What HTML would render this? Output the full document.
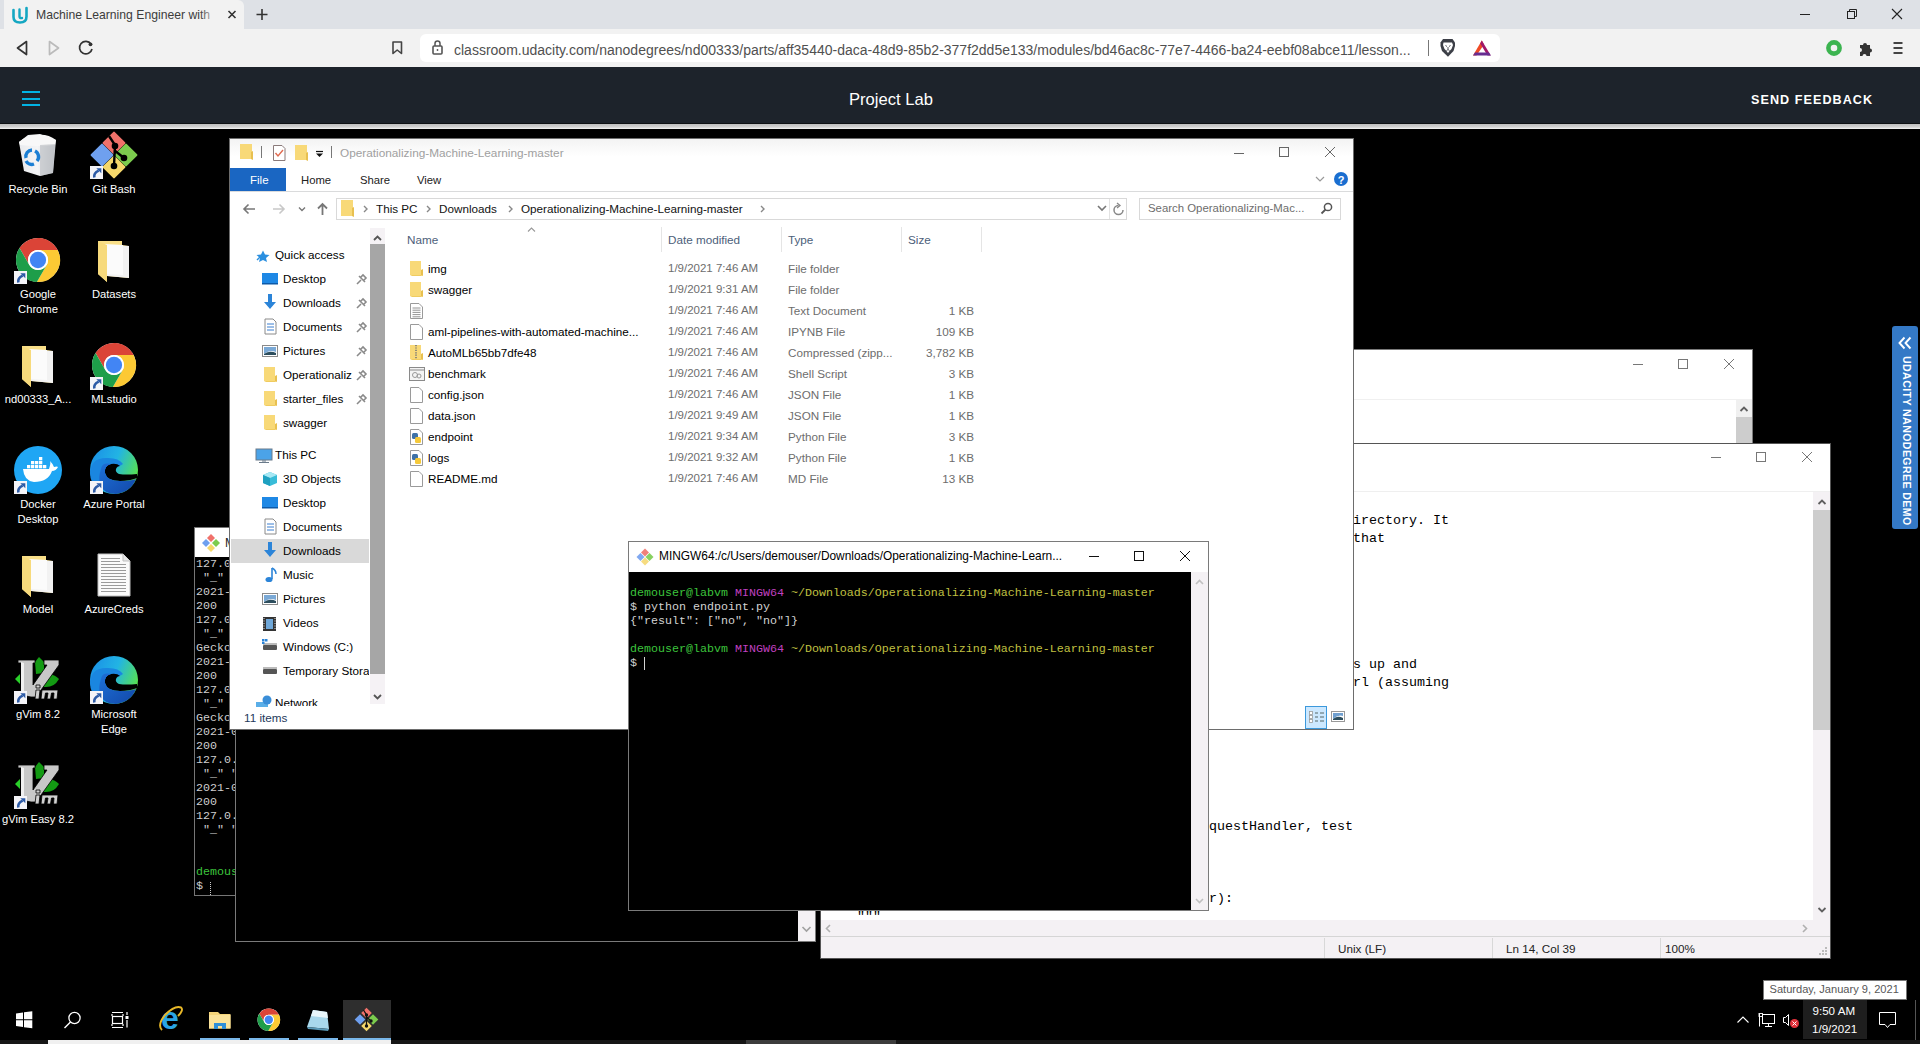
<!DOCTYPE html>
<html><head><meta charset="utf-8">
<style>
*{margin:0;padding:0;box-sizing:border-box}
html,body{width:1920px;height:1044px;overflow:hidden;background:#000;font-family:"Liberation Sans",sans-serif;position:relative}
.a{position:absolute}
.t{position:absolute;white-space:nowrap;line-height:1}
.mono{font-family:"Liberation Mono",monospace}
svg.L{position:absolute;left:0;top:0;overflow:visible}
.dl{position:absolute;color:#fff;font-size:11.2px;line-height:15px;text-align:center;width:76px}
</style></head><body>

<div class="a" style="left:0;top:0;width:1920px;height:29px;background:#dee1e6"></div>
<div class="a" style="left:4px;top:0;width:240px;height:30px;background:#f2f2f2;border-radius:0 6px 0 0"></div>
<div class="a" style="left:0;top:29px;width:1920px;height:38px;background:#f2f2f2"></div>
<div class="a" style="left:420px;top:34px;width:1080px;height:28px;background:#fff;border-radius:6px"></div>
<div class="t" style="left:36px;top:9px;font-size:12.2px;color:#3c3c3c">Machine Learning Engineer with</div>
<div class="a" style="left:200px;top:4px;width:22px;height:22px;background:linear-gradient(90deg,rgba(242,242,242,0),#f2f2f2 80%)"></div>
<div class="t" style="left:454px;top:42.5px;font-size:14px;color:#505050">classroom.udacity.com/nanodegrees/nd00333/parts/aff35440-daca-48d9-85b2-377f2dd5e133/modules/bd46ac8c-77e7-4466-ba24-eebf08abce11/lesson...</div>
<svg class="L" width="1920" height="70">
 <!-- udacity favicon -->
 <path d="M13.5,10 V17 Q13.5,22.5 20,22.5 Q26.5,22.5 26.5,16.5 V8" fill="none" stroke="#15a7c2" stroke-width="2.6" stroke-linecap="round"/>
 <path d="M19.5,9.5 V16.5 Q19.5,18.5 22,18" fill="none" stroke="#15a7c2" stroke-width="2.4" stroke-linecap="round"/>
 <!-- tab close -->
 <path d="M228.5,11 L235.5,18 M235.5,11 L228.5,18" stroke="#333" stroke-width="1.6"/>
 <!-- new tab + -->
 <path d="M262,9 V20 M256.5,14.5 H267.5" stroke="#333" stroke-width="1.6"/>
 <!-- window controls -->
 <path d="M1800,14.5 H1810" stroke="#222" stroke-width="1"/>
 <rect x="1847.5" y="11.5" width="7" height="7" fill="none" stroke="#222" stroke-width="1"/>
 <path d="M1849.5,11.5 V9.5 H1856.5 V16.5 H1854.5" fill="none" stroke="#222" stroke-width="1"/>
 <path d="M1892,9 L1902,19 M1902,9 L1892,19" stroke="#222" stroke-width="1.1"/>
 <!-- back / fwd / reload -->
 <path d="M26.5,41.5 L17.5,48 L26.5,54.5 Z" fill="none" stroke="#333" stroke-width="1.7" stroke-linejoin="round"/>
 <path d="M49.5,41.5 L58.5,48 L49.5,54.5 Z" fill="none" stroke="#bbb" stroke-width="1.7" stroke-linejoin="round"/>
 <path d="M91,44 A6.3,6.3 0 1 0 92,49" fill="none" stroke="#333" stroke-width="1.7"/>
 <circle cx="90.5" cy="44.3" r="1.9" fill="#333"/>
 <!-- bookmark -->
 <path d="M393,42 H401.5 V53.5 L397.2,50 L393,53.5 Z" fill="none" stroke="#444" stroke-width="1.6" stroke-linejoin="round"/>
 <!-- lock -->
 <rect x="433" y="46" width="9" height="8" rx="1" fill="none" stroke="#555" stroke-width="1.6"/>
 <path d="M435,46 V43.5 A2.5,2.5 0 0 1 440,43.5 V46" fill="none" stroke="#555" stroke-width="1.5"/>
 <circle cx="437.5" cy="50" r="0.9" fill="#555"/>
 <!-- divider -->
 <path d="M1428.5,40 V56" stroke="#777" stroke-width="1"/>
 <!-- brave lion -->
 <path d="M1443,39 L1452.5,39 L1455,42.5 L1455,46 L1453.5,51 L1448,56.8 L1442,51 L1440.5,46 L1440.5,42.5 Z" fill="#3c3f47"/>
 <path d="M1443.5,42.5 L1452,42.5 L1453,45 L1451.5,49 L1449.5,51 L1448,53 L1446.5,51 L1444.5,49 L1443,45 Z" fill="#fff"/>
 <path d="M1445.5,45.5 L1447,46.5 M1450.5,45.5 L1449,46.5 M1448,47 V49 M1446.5,50.5 L1448,49.5 L1449.5,50.5" stroke="#3c3f47" stroke-width="0.9" fill="none"/>
 <!-- BAT triangle -->
 <path d="M1481.8,40.5 L1484,44.5 L1476.5,55.5 L1473,55.5 Z" fill="#f04a24"/>
 <path d="M1481.8,40.5 L1490.8,55.5 L1487.5,55.5 L1480.2,43.5 Z" fill="#a0196a"/>
 <path d="M1473,55.5 L1490.8,55.5 L1489,52.5 L1475,52.5 Z" fill="#662d91"/>
 <!-- green circle ext -->
 <circle cx="1834" cy="48" r="5.6" fill="none" stroke="#3cb450" stroke-width="4.6"/>
 <!-- puzzle -->
 <path d="M1860,45 H1863 A2,2 0 1 1 1867,45 H1870 V48.5 A2,2 0 1 1 1870,52.5 V56 H1866.5 A2,2 0 1 0 1862.5,56 H1860 V52 A2,2 0 1 0 1860,48 Z" fill="#333"/>
 <!-- menu -->
 <path d="M1893.5,43 H1902.5 M1893.5,48 H1902.5 M1893.5,53 H1902.5" stroke="#444" stroke-width="1.8"/>
</svg>
<!-- udacity header -->
<div class="a" style="left:0;top:67px;width:1920px;height:56px;background:#1d232b"></div>
<div class="a" style="left:0;top:123px;width:1920px;height:1px;background:#0e1114"></div>
<div class="a" style="left:0;top:124px;width:1920px;height:5px;background:linear-gradient(#bdbdbd,#d2d2d2 60%,#f4f4f4)"></div>
<div class="t" style="left:849px;top:92px;font-size:16.6px;color:#fff">Project Lab</div>
<div class="t" style="left:1751px;top:94px;font-size:12.6px;font-weight:bold;letter-spacing:1.05px;color:#fff">SEND FEEDBACK</div>
<div class="a" style="left:22px;top:91px;width:18px;height:2px;background:#02b3e4"></div>
<div class="a" style="left:22px;top:98px;width:18px;height:2px;background:#02b3e4"></div>
<div class="a" style="left:22px;top:104px;width:18px;height:2px;background:#02b3e4"></div>
<svg class="L" width="1920" height="1044"><defs><linearGradient id="rbg" x1="0" y1="0" x2="1" y2="0"><stop offset="0" stop-color="#e9ebee"/><stop offset="0.5" stop-color="#f4f5f6"/><stop offset="1" stop-color="#c9ccd0"/></linearGradient></defs><path d="M19,142 L28,135 L40,134 L56,140 L53,173 L40,176 L24,171 Z" fill="url(#rbg)"/><path d="M19,142 Q28,134 38,135 Q48,134 56,140 L55,145 Q38,147 20,145 Z" fill="#f8f8f8"/><path d="M40,145 L55,144 L53,173 L40,176 Z" fill="#b8bbbf" opacity="0.6"/><path d="M26,158 A6.5,6.5 0 0 1 32,150" stroke="#1b7fd4" stroke-width="3.4" fill="none"/><path d="M35,151 A6.5,6.5 0 0 1 37,161" stroke="#1b7fd4" stroke-width="3.4" fill="none"/><path d="M34,164 A6.5,6.5 0 0 1 26,161" stroke="#1b7fd4" stroke-width="3.4" fill="none"/><path d="M114,132.6 L124.4,143.0 L114,153.4 L103.6,143.0 Z" fill="#f0716a" stroke="#f0716a" stroke-width="2" stroke-linejoin="round"/><path d="M126.0,144.6 L136.4,155 L126.0,165.4 L115.6,155 Z" fill="#7ccc4e" stroke="#7ccc4e" stroke-width="2" stroke-linejoin="round"/><path d="M114,156.6 L124.4,167.0 L114,177.4 L103.6,167.0 Z" fill="#f6d86b" stroke="#f6d86b" stroke-width="2" stroke-linejoin="round"/><path d="M102.0,144.6 L112.4,155 L102.0,165.4 L91.6,155 Z" fill="#6fa0ef" stroke="#6fa0ef" stroke-width="2" stroke-linejoin="round"/><path d="M109,136 L115,145 L114,166 M114,150 L124,158" stroke="#000" stroke-width="2.4" fill="none"/><circle cx="115" cy="146" r="3.3" fill="#000"/><circle cx="124" cy="158" r="3.3" fill="#000"/><circle cx="114" cy="166" r="3.3" fill="#000"/><rect x="90" y="166" width="13" height="13" fill="#f4f4f8"/><path d="M94.3,177.5 Q93.5,173 98.7,170.6" fill="none" stroke="#2c5aa6" stroke-width="2.6"/><path d="M96.3,168.3 L101.3,168.3 L101.3,173.3 Z" fill="#2c5aa6"/><circle cx="38" cy="260" r="22" fill="#fff"/><path d="M57.59,249.99 A22,22 0 0 0 19.54,248.04 L29.33,265.00 A10.01,10.01 0 0 1 38.00,249.99 Z" fill="#db4437"/><path d="M36.87,281.97 A22,22 0 0 0 57.59,249.99 L38.00,249.99 A10.01,10.01 0 0 1 46.67,265.00 Z" fill="#fcc934"/><path d="M19.54,248.04 A22,22 0 0 0 36.87,281.97 L46.67,265.00 A10.01,10.01 0 0 1 29.33,265.00 Z" fill="#1e9e4a"/><circle cx="38" cy="260" r="10.01" fill="#fff"/><circle cx="38" cy="260" r="8.14" fill="#4285f4"/><rect x="14" y="271" width="13" height="13" fill="#f4f4f8"/><path d="M18.3,282.5 Q17.5,278 22.7,275.6" fill="none" stroke="#2c5aa6" stroke-width="2.6"/><path d="M20.3,273.3 L25.3,273.3 L25.3,278.3 Z" fill="#2c5aa6"/><path d="M98,241 L122,241 L122,245 L129,246 L129,278 L107,276 L107,282 L98,274 Z" fill="#f9df88"/><path d="M107,245 L129,246 L129,278 L107,276 Z" fill="#f2f2f2"/><path d="M105,244 L123,245 L123,275 L105,274 Z" fill="#fbfbfb"/><path d="M98,241 L107,245 L107,282 L98,274 Z" fill="#f7da7c"/><path d="M22,346 L46,346 L46,350 L53,351 L53,383 L31,381 L31,387 L22,379 Z" fill="#f9df88"/><path d="M31,350 L53,351 L53,383 L31,381 Z" fill="#f2f2f2"/><path d="M29,349 L47,350 L47,380 L29,379 Z" fill="#fbfbfb"/><path d="M22,346 L31,350 L31,387 L22,379 Z" fill="#f7da7c"/><circle cx="114" cy="365" r="22" fill="#fff"/><path d="M133.59,354.99 A22,22 0 0 0 95.54,353.04 L105.33,370.00 A10.01,10.01 0 0 1 114.00,354.99 Z" fill="#db4437"/><path d="M112.87,386.97 A22,22 0 0 0 133.59,354.99 L114.00,354.99 A10.01,10.01 0 0 1 122.67,370.00 Z" fill="#fcc934"/><path d="M95.54,353.04 A22,22 0 0 0 112.87,386.97 L122.67,370.00 A10.01,10.01 0 0 1 105.33,370.00 Z" fill="#1e9e4a"/><circle cx="114" cy="365" r="10.01" fill="#fff"/><circle cx="114" cy="365" r="8.14" fill="#4285f4"/><rect x="90" y="377" width="13" height="13" fill="#f4f4f8"/><path d="M94.3,388.5 Q93.5,384 98.7,381.6" fill="none" stroke="#2c5aa6" stroke-width="2.6"/><path d="M96.3,379.3 L101.3,379.3 L101.3,384.3 Z" fill="#2c5aa6"/><circle cx="38" cy="470" r="24" fill="#1fa6f4"/><path d="M23,469 H49 Q51,463 50,461 Q53,464 54,467 Q57,466 58,467 Q56,471 52,471 Q48,482 34,482 Q24,481 23,469 Z" fill="#fff"/><rect x="27" y="465" width="3.3" height="3.3" fill="#fff"/><rect x="31" y="465" width="3.3" height="3.3" fill="#fff"/><rect x="35" y="465" width="3.3" height="3.3" fill="#fff"/><rect x="39" y="465" width="3.3" height="3.3" fill="#fff"/><rect x="43" y="465" width="3.3" height="3.3" fill="#fff"/><rect x="31" y="461" width="3.3" height="3.3" fill="#fff"/><rect x="35" y="461" width="3.3" height="3.3" fill="#fff"/><rect x="39" y="461" width="3.3" height="3.3" fill="#fff"/><rect x="39" y="457" width="3.3" height="3.3" fill="#fff"/><rect x="14" y="481" width="13" height="13" fill="#f4f4f8"/><path d="M18.3,492.5 Q17.5,488 22.7,485.6" fill="none" stroke="#2c5aa6" stroke-width="2.6"/><path d="M20.3,483.3 L25.3,483.3 L25.3,488.3 Z" fill="#2c5aa6"/><defs><linearGradient id="eg114470" x1="0" y1="0.2" x2="1" y2="0.6"><stop offset="0" stop-color="#1b90e6"/><stop offset="0.5" stop-color="#22b4e4"/><stop offset="1" stop-color="#5ae44a"/></linearGradient><linearGradient id="eg114470w" x1="0" y1="0" x2="1" y2="1"><stop offset="0" stop-color="#1e70d8"/><stop offset="1" stop-color="#1248a8"/></linearGradient></defs><circle cx="114" cy="470" r="24" fill="url(#eg114470)"/><path d="M 90.0,473.0 Q 91.0,457.0 108.0,458.0 Q 119.0,458.0 123.0,464.0 L 116.0,468.0 L 100.0,492.0 Q 90.0,484.0 90.0,473.0 Z" fill="#1a86e0"/><path d="M 111.0,464.0 Q 104.0,466.0 105.0,473.0 Q 107.0,481.0 120.0,481.0 Q 130.0,481.0 137.0,478.0 L 137.0,474.0 Q 126.0,475.0 119.0,474.0 Q 115.0,472.0 116.0,469.0 Q 117.0,466.0 120.0,466.0 Q 117.0,463.0 111.0,464.0 Z" fill="#000"/><path d="M 101.0,469.0 Q 102.0,462.0 111.0,464.0 Q 104.0,466.0 105.0,473.0 Q 107.0,481.0 120.0,481.0 Q 130.0,481.0 136.0,479.0 Q 131.0,492.0 116.0,494.0 Q 104.0,494.0 100.0,485.0 Q 98.0,477.0 101.0,469.0 Z" fill="url(#eg114470w)"/><rect x="90" y="481" width="13" height="13" fill="#f4f4f8"/><path d="M94.3,492.5 Q93.5,488 98.7,485.6" fill="none" stroke="#2c5aa6" stroke-width="2.6"/><path d="M96.3,483.3 L101.3,483.3 L101.3,488.3 Z" fill="#2c5aa6"/><path d="M22,556 L46,556 L46,560 L53,561 L53,593 L31,591 L31,597 L22,589 Z" fill="#f9df88"/><path d="M31,560 L53,561 L53,593 L31,591 Z" fill="#f2f2f2"/><path d="M29,559 L47,560 L47,590 L29,589 Z" fill="#fbfbfb"/><path d="M22,556 L31,560 L31,597 L22,589 Z" fill="#f7da7c"/><path d="M98,554 L123,554 L130,561 L130,596 L98,596 Z" fill="#fafafa" stroke="#bfbfbf" stroke-width="1"/><path d="M123,554 L123,561 L130,561" fill="#e6e6e6" stroke="#bfbfbf" stroke-width="1"/><path d="M101,558.5 H120" stroke="#9a9a9a" stroke-width="1"/><path d="M101,561.5 H120" stroke="#9a9a9a" stroke-width="1"/><path d="M101,564.5 H126" stroke="#9a9a9a" stroke-width="1"/><path d="M101,567.5 H126" stroke="#9a9a9a" stroke-width="1"/><path d="M101,570.5 H126" stroke="#9a9a9a" stroke-width="1"/><path d="M101,573.5 H126" stroke="#9a9a9a" stroke-width="1"/><path d="M101,576.5 H126" stroke="#9a9a9a" stroke-width="1"/><path d="M101,579.5 H126" stroke="#9a9a9a" stroke-width="1"/><path d="M101,582.5 H126" stroke="#9a9a9a" stroke-width="1"/><path d="M101,585.5 H126" stroke="#9a9a9a" stroke-width="1"/><path d="M101,588.5 H126" stroke="#9a9a9a" stroke-width="1"/><path d="M101,591.5 H126" stroke="#9a9a9a" stroke-width="1"/><path d="M 39.0,657.0 L 44.0,662.0 L 44.0,673.0 L 36.0,674.0 L 35.0,662.0 Z" fill="#139a13"/><path d="M 20.0,674.0 L 15.0,679.0 L 20.0,684.0 Z" fill="#2ad02a"/><path d="M 42.0,676.0 Q 52.0,672.0 59.0,679.0 Q 54.0,688.0 44.0,687.0 L 40.0,685.0 Z" fill="#139a13"/><path d="M 18.0,660.0 H 35.0 V 663.0 H 33.0 V 685.0 L 47.0,665.0 H 44.0 V 660.0 H 59.0 V 665.0 L 36.0,697.0 H 31.0 L 21.0,695.0 V 663.0 H 18.0 Z" fill="#c8c8c8" stroke="#000" stroke-width="0.8"/><path d="M 21.0,662.0 V 695.0 L 24.0,696.0 V 663.0 Z" fill="#f0f0f0"/><path d="M 36.0,685.0 H 40.0 V 688.0 H 36.0 Z M 36.0,690.0 H 40.0 L 39.0,699.0 H 35.0 Z M 42.0,690.0 H 58.0 L 57.0,699.0 H 53.5 L 54.0,693.0 H 51.5 L 50.5,699.0 H 47.0 L 48.0,693.0 H 45.5 L 44.5,699.0 H 41.0 Z" fill="#d0d0d0" stroke="#000" stroke-width="0.8"/><rect x="14" y="691" width="13" height="13" fill="#f4f4f8"/><path d="M18.3,702.5 Q17.5,698 22.7,695.6" fill="none" stroke="#2c5aa6" stroke-width="2.6"/><path d="M20.3,693.3 L25.3,693.3 L25.3,698.3 Z" fill="#2c5aa6"/><defs><linearGradient id="eg114680" x1="0" y1="0.2" x2="1" y2="0.6"><stop offset="0" stop-color="#1b90e6"/><stop offset="0.5" stop-color="#22b4e4"/><stop offset="1" stop-color="#5ae44a"/></linearGradient><linearGradient id="eg114680w" x1="0" y1="0" x2="1" y2="1"><stop offset="0" stop-color="#1e70d8"/><stop offset="1" stop-color="#1248a8"/></linearGradient></defs><circle cx="114" cy="680" r="24" fill="url(#eg114680)"/><path d="M 90.0,683.0 Q 91.0,667.0 108.0,668.0 Q 119.0,668.0 123.0,674.0 L 116.0,678.0 L 100.0,702.0 Q 90.0,694.0 90.0,683.0 Z" fill="#1a86e0"/><path d="M 111.0,674.0 Q 104.0,676.0 105.0,683.0 Q 107.0,691.0 120.0,691.0 Q 130.0,691.0 137.0,688.0 L 137.0,684.0 Q 126.0,685.0 119.0,684.0 Q 115.0,682.0 116.0,679.0 Q 117.0,676.0 120.0,676.0 Q 117.0,673.0 111.0,674.0 Z" fill="#000"/><path d="M 101.0,679.0 Q 102.0,672.0 111.0,674.0 Q 104.0,676.0 105.0,683.0 Q 107.0,691.0 120.0,691.0 Q 130.0,691.0 136.0,689.0 Q 131.0,702.0 116.0,704.0 Q 104.0,704.0 100.0,695.0 Q 98.0,687.0 101.0,679.0 Z" fill="url(#eg114680w)"/><rect x="90" y="691" width="13" height="13" fill="#f4f4f8"/><path d="M94.3,702.5 Q93.5,698 98.7,695.6" fill="none" stroke="#2c5aa6" stroke-width="2.6"/><path d="M96.3,693.3 L101.3,693.3 L101.3,698.3 Z" fill="#2c5aa6"/><path d="M 39.0,762.0 L 44.0,767.0 L 44.0,778.0 L 36.0,779.0 L 35.0,767.0 Z" fill="#139a13"/><path d="M 20.0,779.0 L 15.0,784.0 L 20.0,789.0 Z" fill="#2ad02a"/><path d="M 42.0,781.0 Q 52.0,777.0 59.0,784.0 Q 54.0,793.0 44.0,792.0 L 40.0,790.0 Z" fill="#139a13"/><path d="M 18.0,765.0 H 35.0 V 768.0 H 33.0 V 790.0 L 47.0,770.0 H 44.0 V 765.0 H 59.0 V 770.0 L 36.0,802.0 H 31.0 L 21.0,800.0 V 768.0 H 18.0 Z" fill="#c8c8c8" stroke="#000" stroke-width="0.8"/><path d="M 21.0,767.0 V 800.0 L 24.0,801.0 V 768.0 Z" fill="#f0f0f0"/><path d="M 36.0,790.0 H 40.0 V 793.0 H 36.0 Z M 36.0,795.0 H 40.0 L 39.0,804.0 H 35.0 Z M 42.0,795.0 H 58.0 L 57.0,804.0 H 53.5 L 54.0,798.0 H 51.5 L 50.5,804.0 H 47.0 L 48.0,798.0 H 45.5 L 44.5,804.0 H 41.0 Z" fill="#d0d0d0" stroke="#000" stroke-width="0.8"/><rect x="14" y="796" width="13" height="13" fill="#f4f4f8"/><path d="M18.3,807.5 Q17.5,803 22.7,800.6" fill="none" stroke="#2c5aa6" stroke-width="2.6"/><path d="M20.3,798.3 L25.3,798.3 L25.3,803.3 Z" fill="#2c5aa6"/></svg><div class="dl" style="left:0px;top:182px">Recycle Bin</div><div class="dl" style="left:76px;top:182px">Git Bash</div><div class="dl" style="left:0px;top:287px">Google<br>Chrome</div><div class="dl" style="left:76px;top:287px">Datasets</div><div class="dl" style="left:0px;top:392px">nd00333_A...</div><div class="dl" style="left:76px;top:392px">MLstudio</div><div class="dl" style="left:0px;top:497px">Docker<br>Desktop</div><div class="dl" style="left:76px;top:497px">Azure Portal</div><div class="dl" style="left:0px;top:602px">Model</div><div class="dl" style="left:76px;top:602px">AzureCreds</div><div class="dl" style="left:0px;top:707px">gVim 8.2</div><div class="dl" style="left:76px;top:707px">Microsoft<br>Edge</div><div class="dl" style="left:0px;top:812px">gVim Easy 8.2</div><div class="a" style="left:194px;top:527px;width:43px;height:369px;background:#000;border:1px solid #767676;border-right:none"></div><div class="a" style="left:195px;top:528px;width:42px;height:29px;background:#fff"></div><svg class="L" width="1920" height="1044"><path d="M211,534 L215,538 L211,542 L207,538 Z" fill="#f0716a"/><path d="M216,539 L220,543 L216,547 L212,543 Z" fill="#7ccc4e"/><path d="M206,539 L210,543 L206,547 L202,543 Z" fill="#6fa0ef"/><path d="M211,544 L215,548 L211,552 L207,548 Z" fill="#f6d86b"/></svg><div class="a" style="left:195px;top:528px;width:35px;height:29px;overflow:hidden"><div class="t" style="left:30px;top:9px;font-size:12px;color:#222">MINGW64</div></div><div class="a" style="left:196px;top:557px;width:40px;height:338px;overflow:hidden"><div class="t" style="left:0;top:0px;font-family:'Liberation Mono',monospace;font-size:11.67px;line-height:14px;color:#cfcfcf;white-space:pre">127.0.0.1 - - [09/Jan/2021</div><div class="t" style="left:0;top:14px;font-family:'Liberation Mono',monospace;font-size:11.67px;line-height:14px;color:#cfcfcf;white-space:pre"> "_" "</div><div class="t" style="left:0;top:28px;font-family:'Liberation Mono',monospace;font-size:11.67px;line-height:14px;color:#cfcfcf;white-space:pre">2021-01-09</div><div class="t" style="left:0;top:42px;font-family:'Liberation Mono',monospace;font-size:11.67px;line-height:14px;color:#cfcfcf;white-space:pre">200</div><div class="t" style="left:0;top:56px;font-family:'Liberation Mono',monospace;font-size:11.67px;line-height:14px;color:#cfcfcf;white-space:pre">127.0.0.1</div><div class="t" style="left:0;top:70px;font-family:'Liberation Mono',monospace;font-size:11.67px;line-height:14px;color:#cfcfcf;white-space:pre"> "_"</div><div class="t" style="left:0;top:84px;font-family:'Liberation Mono',monospace;font-size:11.67px;line-height:14px;color:#cfcfcf;white-space:pre">Gecko)</div><div class="t" style="left:0;top:98px;font-family:'Liberation Mono',monospace;font-size:11.67px;line-height:14px;color:#cfcfcf;white-space:pre">2021-01-09</div><div class="t" style="left:0;top:112px;font-family:'Liberation Mono',monospace;font-size:11.67px;line-height:14px;color:#cfcfcf;white-space:pre">200</div><div class="t" style="left:0;top:126px;font-family:'Liberation Mono',monospace;font-size:11.67px;line-height:14px;color:#cfcfcf;white-space:pre">127.0.0.1</div><div class="t" style="left:0;top:140px;font-family:'Liberation Mono',monospace;font-size:11.67px;line-height:14px;color:#cfcfcf;white-space:pre"> "_"</div><div class="t" style="left:0;top:154px;font-family:'Liberation Mono',monospace;font-size:11.67px;line-height:14px;color:#cfcfcf;white-space:pre">Gecko)</div><div class="t" style="left:0;top:168px;font-family:'Liberation Mono',monospace;font-size:11.67px;line-height:14px;color:#cfcfcf;white-space:pre">2021-01-09</div><div class="t" style="left:0;top:182px;font-family:'Liberation Mono',monospace;font-size:11.67px;line-height:14px;color:#cfcfcf;white-space:pre">200</div><div class="t" style="left:0;top:196px;font-family:'Liberation Mono',monospace;font-size:11.67px;line-height:14px;color:#cfcfcf;white-space:pre">127.0.0.1</div><div class="t" style="left:0;top:210px;font-family:'Liberation Mono',monospace;font-size:11.67px;line-height:14px;color:#cfcfcf;white-space:pre"> "_" "</div><div class="t" style="left:0;top:224px;font-family:'Liberation Mono',monospace;font-size:11.67px;line-height:14px;color:#cfcfcf;white-space:pre">2021-01-09</div><div class="t" style="left:0;top:238px;font-family:'Liberation Mono',monospace;font-size:11.67px;line-height:14px;color:#cfcfcf;white-space:pre">200</div><div class="t" style="left:0;top:252px;font-family:'Liberation Mono',monospace;font-size:11.67px;line-height:14px;color:#cfcfcf;white-space:pre">127.0.0.1</div><div class="t" style="left:0;top:266px;font-family:'Liberation Mono',monospace;font-size:11.67px;line-height:14px;color:#cfcfcf;white-space:pre"> "_" "</div><div class="t" style="left:0;top:280px;font-family:'Liberation Mono',monospace;font-size:11.67px;line-height:14px;color:#cfcfcf;white-space:pre"></div><div class="t" style="left:0;top:294px;font-family:'Liberation Mono',monospace;font-size:11.67px;line-height:14px;color:#cfcfcf;white-space:pre"></div><div class="t" style="left:0;top:308px;font-family:'Liberation Mono',monospace;font-size:11.67px;line-height:14px;color:#3cc43c;white-space:pre">demouser</div><div class="t" style="left:0;top:322px;font-family:'Liberation Mono',monospace;font-size:11.67px;line-height:14px;color:#cfcfcf;white-space:pre">$ </div><div class="a" style="left:14px;top:325px;width:1px;height:13px;border-left:1px dotted #ccc"></div></div><div class="a" style="left:235px;top:700px;width:581px;height:242px;background:#000;border:1px solid #7a7a7a"></div><div class="a" style="left:798px;top:911px;width:17px;height:30px;background:#f4f1f4"></div><svg class="L" width="1920" height="1044"><path d="M802.5,927 L806.5,931 L810.5,927" fill="none" stroke="#a0a0a0" stroke-width="1.6"/></svg><div class="a" style="left:1353px;top:349px;width:400px;height:100px;background:#fff;border:1px solid #7a7a7a"></div><div class="a" style="left:1354px;top:399px;width:398px;height:1px;background:#f0f0f0"></div><div class="a" style="left:1736px;top:400px;width:16px;height:43px;background:#f0f0f0"></div><div class="a" style="left:1736px;top:417px;width:16px;height:26px;background:#cdcdcd"></div><svg class="L" width="1920" height="1044"><path d="M1633,364.5 H1643" stroke="#777" stroke-width="1"/><rect x="1678.5" y="359.5" width="9" height="9" fill="none" stroke="#777" stroke-width="1"/><path d="M1724,359 L1734,369 M1734,359 L1724,369" stroke="#777" stroke-width="1"/><path d="M1740.5,411 L1744,407.5 L1747.5,411" fill="none" stroke="#606060" stroke-width="1.8"/></svg><div class="a" style="left:820px;top:443px;width:1011px;height:516px;background:#fff;border:1px solid #555"></div><div class="a" style="left:821px;top:491px;width:1009px;height:1px;background:#efefef"></div><div class="a" style="left:1813px;top:492px;width:17px;height:428px;background:#f4f1f4"></div><div class="a" style="left:1813px;top:510px;width:17px;height:220px;background:#cdcdcd"></div><div class="a" style="left:821px;top:920px;width:1009px;height:17px;background:#f4f1f4"></div><div class="a" style="left:821px;top:936px;width:1009px;height:1px;background:#d5d5d5"></div><div class="a" style="left:821px;top:937px;width:1009px;height:21px;background:#f4f1f4"></div><div class="a" style="left:1324px;top:938px;width:1px;height:20px;background:#d8d8d8"></div><div class="a" style="left:1492px;top:938px;width:1px;height:20px;background:#d8d8d8"></div><div class="a" style="left:1660px;top:938px;width:1px;height:20px;background:#d8d8d8"></div><div class="t" style="left:1338px;top:943px;font-size:11.7px;color:#222">Unix (LF)</div><div class="t" style="left:1506px;top:943px;font-size:11.7px;color:#222">Ln 14, Col 39</div><div class="t" style="left:1665px;top:943px;font-size:11.7px;color:#222">100%</div><svg class="L" width="1920" height="1044"><path d="M1711,457.5 H1721" stroke="#777" stroke-width="1"/><rect x="1756.5" y="452.5" width="9" height="9" fill="none" stroke="#777" stroke-width="1"/><path d="M1802,452 L1812,462 M1812,452 L1802,462" stroke="#777" stroke-width="1"/><path d="M1818.5,504 L1822,500.5 L1825.5,504" fill="none" stroke="#606060" stroke-width="1.8"/><path d="M1818.5,908 L1822,911.5 L1825.5,908" fill="none" stroke="#606060" stroke-width="1.8"/><path d="M830,925 L826.5,928.5 L830,932" fill="none" stroke="#b0b0b0" stroke-width="1.6"/><path d="M1803,925 L1806.5,928.5 L1803,932" fill="none" stroke="#b0b0b0" stroke-width="1.6"/><g fill="#bbb"><rect x="1822" y="953" width="2" height="2"/><rect x="1825" y="953" width="2" height="2"/><rect x="1825" y="950" width="2" height="2"/><rect x="1819" y="953" width="2" height="2"/><rect x="1822" y="950" width="2" height="2"/><rect x="1825" y="947" width="2" height="2"/></g></svg><div class="a" style="left:821px;top:492px;width:992px;height:428px;overflow:hidden"><div class="t" style="left:532px;top:22px;font-family:'Liberation Mono',monospace;font-size:13.33px;line-height:14px;color:#000;white-space:pre">irectory. It</div><div class="t" style="left:532px;top:40px;font-family:'Liberation Mono',monospace;font-size:13.33px;line-height:14px;color:#000;white-space:pre">that</div><div class="t" style="left:532px;top:166px;font-family:'Liberation Mono',monospace;font-size:13.33px;line-height:14px;color:#000;white-space:pre">s up and</div><div class="t" style="left:532px;top:184px;font-family:'Liberation Mono',monospace;font-size:13.33px;line-height:14px;color:#000;white-space:pre">rl (assuming</div><div class="t" style="left:388px;top:328px;font-family:'Liberation Mono',monospace;font-size:13.33px;line-height:14px;color:#000;white-space:pre">questHandler, test</div><div class="t" style="left:388px;top:400px;font-family:'Liberation Mono',monospace;font-size:13.33px;line-height:14px;color:#000;white-space:pre">r):</div><div class="t" style="left:36px;top:418px;font-family:'Liberation Mono',monospace;font-size:13.33px;line-height:14px;color:#000;white-space:pre">"""</div></div><div class="a" style="left:229px;top:138px;width:1125px;height:592px;background:#fff;border:1px solid #6d6d6d"></div><div class="a" style="left:230px;top:139px;width:1123px;height:29px;background:linear-gradient(#f3f3f3,#fff 60%)"></div><div class="t" style="left:340px;top:148.0px;font-size:11.8px;color:#a0a0a0;">Operationalizing-Machine-Learning-master</div><div class="a" style="left:230px;top:168px;width:56px;height:23px;background:#1a66c2"></div><div class="t" style="left:250px;top:175.3px;font-size:11.5px;color:#fff;">File</div><div class="t" style="left:301px;top:175.4px;font-size:11.3px;color:#222;">Home</div><div class="t" style="left:360px;top:175.4px;font-size:11.3px;color:#222;">Share</div><div class="t" style="left:417px;top:175.4px;font-size:11.3px;color:#222;">View</div><div class="a" style="left:230px;top:191px;width:1123px;height:1px;background:#dadbdc"></div><div class="a" style="left:336px;top:198px;width:791px;height:22px;border:1px solid #d9d9d9;background:#fff"></div><div class="a" style="left:1109px;top:199px;width:1px;height:20px;background:#e3e3e3"></div><div class="t" style="left:376px;top:203.1px;font-size:11.7px;color:#111;">This PC</div><div class="t" style="left:439px;top:203.1px;font-size:11.7px;color:#111;">Downloads</div><div class="t" style="left:521px;top:203.1px;font-size:11.7px;color:#111;">Operationalizing-Machine-Learning-master</div><div class="a" style="left:1139px;top:198px;width:202px;height:22px;border:1px solid #d9d9d9;background:#fff"></div><div class="t" style="left:1148px;top:203.3px;font-size:11.4px;color:#6d6d6d;">Search Operationalizing-Mac...</div><div class="a" style="left:231px;top:539px;width:138px;height:24px;background:#d9d9d9"></div><div class="a" style="left:370px;top:228px;width:15px;height:476px;background:#f5f2f5"></div><div class="a" style="left:370px;top:244px;width:15px;height:430px;background:#a6a6a6"></div><div class="a" style="left:230px;top:228px;width:139px;height:478px;overflow:hidden"><div class="t" style="left:45px;top:20.7px;font-size:11.7px;color:#000">Quick access</div><div class="t" style="left:53px;top:45.1px;font-size:11.7px;color:#000">Desktop</div><div class="t" style="left:53px;top:69.1px;font-size:11.7px;color:#000">Downloads</div><div class="t" style="left:53px;top:93.1px;font-size:11.7px;color:#000">Documents</div><div class="t" style="left:53px;top:117.1px;font-size:11.7px;color:#000">Pictures</div><div class="t" style="left:53px;top:141.1px;font-size:11.7px;color:#000">Operationaliz</div><div class="t" style="left:53px;top:165.1px;font-size:11.7px;color:#000">starter_files</div><div class="t" style="left:53px;top:189.1px;font-size:11.7px;color:#000">swagger</div><div class="t" style="left:45px;top:221.1px;font-size:11.7px;color:#000">This PC</div><div class="t" style="left:53px;top:245.1px;font-size:11.7px;color:#000">3D Objects</div><div class="t" style="left:53px;top:269.1px;font-size:11.7px;color:#000">Desktop</div><div class="t" style="left:53px;top:293.1px;font-size:11.7px;color:#000">Documents</div><div class="t" style="left:53px;top:317.1px;font-size:11.7px;color:#000">Downloads</div><div class="t" style="left:53px;top:341.1px;font-size:11.7px;color:#000">Music</div><div class="t" style="left:53px;top:365.1px;font-size:11.7px;color:#000">Pictures</div><div class="t" style="left:53px;top:389.1px;font-size:11.7px;color:#000">Videos</div><div class="t" style="left:53px;top:413.1px;font-size:11.7px;color:#000">Windows (C:)</div><div class="t" style="left:53px;top:437.1px;font-size:11.7px;color:#000">Temporary Stora</div><div class="t" style="left:45px;top:469.1px;font-size:11.7px;color:#000">Network</div></div><div class="t" style="left:407px;top:234.1px;font-size:11.7px;color:#4c607a;">Name</div><div class="t" style="left:668px;top:234.1px;font-size:11.7px;color:#4c607a;">Date modified</div><div class="t" style="left:788px;top:234.1px;font-size:11.7px;color:#4c607a;">Type</div><div class="t" style="left:908px;top:234.1px;font-size:11.7px;color:#4c607a;">Size</div><div class="t" style="left:428px;top:263.1px;font-size:11.7px;color:#000;">img</div><div class="t" style="left:668px;top:263.3px;font-size:11.5px;color:#6d6d6d;">1/9/2021 7:46 AM</div><div class="t" style="left:788px;top:263.1px;font-size:11.7px;color:#6d6d6d;">File folder</div><div class="t" style="left:428px;top:284.1px;font-size:11.7px;color:#000;">swagger</div><div class="t" style="left:668px;top:284.3px;font-size:11.5px;color:#6d6d6d;">1/9/2021 9:31 AM</div><div class="t" style="left:788px;top:284.1px;font-size:11.7px;color:#6d6d6d;">File folder</div><div class="t" style="left:668px;top:305.3px;font-size:11.5px;color:#6d6d6d;">1/9/2021 7:46 AM</div><div class="t" style="left:788px;top:305.1px;font-size:11.7px;color:#6d6d6d;">Text Document</div><div class="t" style="left:900px;width:74px;text-align:right;top:305.1px;font-size:11.7px;color:#6d6d6d">1 KB</div><div class="t" style="left:428px;top:326.1px;font-size:11.7px;color:#000;">aml-pipelines-with-automated-machine...</div><div class="t" style="left:668px;top:326.3px;font-size:11.5px;color:#6d6d6d;">1/9/2021 7:46 AM</div><div class="t" style="left:788px;top:326.1px;font-size:11.7px;color:#6d6d6d;">IPYNB File</div><div class="t" style="left:900px;width:74px;text-align:right;top:326.1px;font-size:11.7px;color:#6d6d6d">109 KB</div><div class="t" style="left:428px;top:347.1px;font-size:11.7px;color:#000;">AutoMLb65bb7dfe48</div><div class="t" style="left:668px;top:347.3px;font-size:11.5px;color:#6d6d6d;">1/9/2021 7:46 AM</div><div class="t" style="left:788px;top:347.1px;font-size:11.7px;color:#6d6d6d;">Compressed (zipp...</div><div class="t" style="left:900px;width:74px;text-align:right;top:347.1px;font-size:11.7px;color:#6d6d6d">3,782 KB</div><div class="t" style="left:428px;top:368.1px;font-size:11.7px;color:#000;">benchmark</div><div class="t" style="left:668px;top:368.3px;font-size:11.5px;color:#6d6d6d;">1/9/2021 7:46 AM</div><div class="t" style="left:788px;top:368.1px;font-size:11.7px;color:#6d6d6d;">Shell Script</div><div class="t" style="left:900px;width:74px;text-align:right;top:368.1px;font-size:11.7px;color:#6d6d6d">3 KB</div><div class="t" style="left:428px;top:389.1px;font-size:11.7px;color:#000;">config.json</div><div class="t" style="left:668px;top:389.3px;font-size:11.5px;color:#6d6d6d;">1/9/2021 7:46 AM</div><div class="t" style="left:788px;top:389.1px;font-size:11.7px;color:#6d6d6d;">JSON File</div><div class="t" style="left:900px;width:74px;text-align:right;top:389.1px;font-size:11.7px;color:#6d6d6d">1 KB</div><div class="t" style="left:428px;top:410.1px;font-size:11.7px;color:#000;">data.json</div><div class="t" style="left:668px;top:410.3px;font-size:11.5px;color:#6d6d6d;">1/9/2021 9:49 AM</div><div class="t" style="left:788px;top:410.1px;font-size:11.7px;color:#6d6d6d;">JSON File</div><div class="t" style="left:900px;width:74px;text-align:right;top:410.1px;font-size:11.7px;color:#6d6d6d">1 KB</div><div class="t" style="left:428px;top:431.1px;font-size:11.7px;color:#000;">endpoint</div><div class="t" style="left:668px;top:431.3px;font-size:11.5px;color:#6d6d6d;">1/9/2021 9:34 AM</div><div class="t" style="left:788px;top:431.1px;font-size:11.7px;color:#6d6d6d;">Python File</div><div class="t" style="left:900px;width:74px;text-align:right;top:431.1px;font-size:11.7px;color:#6d6d6d">3 KB</div><div class="t" style="left:428px;top:452.1px;font-size:11.7px;color:#000;">logs</div><div class="t" style="left:668px;top:452.3px;font-size:11.5px;color:#6d6d6d;">1/9/2021 9:32 AM</div><div class="t" style="left:788px;top:452.1px;font-size:11.7px;color:#6d6d6d;">Python File</div><div class="t" style="left:900px;width:74px;text-align:right;top:452.1px;font-size:11.7px;color:#6d6d6d">1 KB</div><div class="t" style="left:428px;top:473.1px;font-size:11.7px;color:#000;">README.md</div><div class="t" style="left:668px;top:473.3px;font-size:11.5px;color:#6d6d6d;">1/9/2021 7:46 AM</div><div class="t" style="left:788px;top:473.1px;font-size:11.7px;color:#6d6d6d;">MD File</div><div class="t" style="left:900px;width:74px;text-align:right;top:473.1px;font-size:11.7px;color:#6d6d6d">13 KB</div><div class="t" style="left:244px;top:711.6px;font-size:11.7px;color:#1e395b;">11 items</div><svg class="L" width="1920" height="1044"><path d="M263,250.5 L265,254.5 L269.5,255 L266,258 L267,262 L263,260 L259,262 L260,258 L256.5,255 L261,254.5 Z" fill="#2a8fe0"/><path d="M257,260 L261,256" stroke="#2a8fe0" stroke-width="1.5"/><rect x="262" y="273" width="16" height="11" fill="#1e88e5"/><rect x="262" y="283" width="16" height="1.5" fill="#0d5aa8"/><rect x="262" y="497" width="16" height="11" fill="#1e88e5"/><rect x="262" y="507" width="16" height="1.5" fill="#0d5aa8"/><path d="M268,294 H272 V302 H276 L270,309 L264,302 H268 Z" fill="#2b84d8"/><path d="M268,542 H272 V550 H276 L270,557 L264,550 H268 Z" fill="#2b84d8"/><path d="M265,319 H273 L276,322 V334 H265 Z" fill="#fff" stroke="#8a8a8a" stroke-width="1"/><path d="M267,324 H274 M267,327 H274 M267,330 H274" stroke="#3a7fd0" stroke-width="1"/><path d="M265,519 H273 L276,522 V534 H265 Z" fill="#fff" stroke="#8a8a8a" stroke-width="1"/><path d="M267,524 H274 M267,527 H274 M267,530 H274" stroke="#3a7fd0" stroke-width="1"/><rect x="262.5" y="345.5" width="15" height="11" fill="#fff" stroke="#8a8a8a" stroke-width="1"/><path d="M264,347 H276 V352 Q270,349 264,354 Z" fill="#7aa9d6"/><path d="M264,354 Q270,350 276,353 V355 H264 Z" fill="#2d4e5e"/><rect x="262.5" y="593.5" width="15" height="11" fill="#fff" stroke="#8a8a8a" stroke-width="1"/><path d="M264,595 H276 V600 Q270,597 264,602 Z" fill="#7aa9d6"/><path d="M264,602 Q270,598 276,601 V603 H264 Z" fill="#2d4e5e"/><path d="M264,367 H275 V381 H264 Z" fill="#f8d978"/><path d="M275,376 L277,375 V382 L275,381 Z" fill="#e8c050"/><path d="M264,381 H275 L277,382 H266 Z" fill="#f0cc60"/><path d="M264,391 H275 V405 H264 Z" fill="#f8d978"/><path d="M275,400 L277,399 V406 L275,405 Z" fill="#e8c050"/><path d="M264,405 H275 L277,406 H266 Z" fill="#f0cc60"/><path d="M264,415 H275 V429 H264 Z" fill="#f8d978"/><path d="M275,424 L277,423 V430 L275,429 Z" fill="#e8c050"/><path d="M264,429 H275 L277,430 H266 Z" fill="#f0cc60"/><rect x="256" y="449" width="16" height="11" fill="#4ba3e8" stroke="#6a7a8a" stroke-width="1"/><path d="M262,461 H266 M259,462.5 H269" stroke="#6a7a8a" stroke-width="1.2"/><path d="M270,472 L277,475 V483 L270,486 L263,483 V475 Z" fill="#38bcd8"/><path d="M270,472 L277,475 L270,478 L263,475 Z" fill="#a8e8f4"/><path d="M270,478 V486 L263,483 V475 Z" fill="#1fa0c0"/><path d="M272,568 V579" stroke="#2b84d8" stroke-width="1.6"/><ellipse cx="269" cy="579.5" rx="3.5" ry="2.6" fill="#2b84d8"/><path d="M272,568 Q276,570 276,574" stroke="#2b84d8" stroke-width="1.5" fill="none"/><rect x="263" y="617" width="13" height="14" fill="#333"/><rect x="266" y="619" width="7" height="10" fill="#6fa7d8"/><path d="M264,618 V630 M275,618 V630" stroke="#ddd" stroke-width="1" stroke-dasharray="1,1.5"/><rect x="263" y="645" width="14" height="5" rx="1" fill="#555"/><rect x="263" y="643" width="14" height="2" fill="#bbb"/><rect x="262" y="639" width="2.5" height="2.5" fill="#2b84d8"/><rect x="265" y="639" width="2.5" height="2.5" fill="#2b84d8"/><rect x="262" y="642" width="2.5" height="2" fill="#2b84d8"/><rect x="263" y="669" width="14" height="5" rx="1" fill="#555"/><rect x="263" y="667" width="14" height="2" fill="#bbb"/><path d="M256,702 H268 V707 H256 Z" fill="#5aaee8"/><circle cx="267" cy="700" r="4.5" fill="#3a8ed8"/><path d="M357,284 L361,280 M359,276 L365,282 M360,278 L363,275 L366,278 L363,281" stroke="#8a8a8a" stroke-width="1.6" fill="none"/><path d="M357,308 L361,304 M359,300 L365,306 M360,302 L363,299 L366,302 L363,305" stroke="#8a8a8a" stroke-width="1.6" fill="none"/><path d="M357,332 L361,328 M359,324 L365,330 M360,326 L363,323 L366,326 L363,329" stroke="#8a8a8a" stroke-width="1.6" fill="none"/><path d="M357,356 L361,352 M359,348 L365,354 M360,350 L363,347 L366,350 L363,353" stroke="#8a8a8a" stroke-width="1.6" fill="none"/><path d="M357,380 L361,376 M359,372 L365,378 M360,374 L363,371 L366,374 L363,377" stroke="#8a8a8a" stroke-width="1.6" fill="none"/><path d="M357,404 L361,400 M359,396 L365,402 M360,398 L363,395 L366,398 L363,401" stroke="#8a8a8a" stroke-width="1.6" fill="none"/><path d="M374,240 L377.5,236.5 L381,240" fill="none" stroke="#555" stroke-width="1.8"/><path d="M374,695 L377.5,698.5 L381,695" fill="none" stroke="#555" stroke-width="1.8"/><path d="M240,144 H252 V159 H240 Z" fill="#f8d978"/><path d="M251,152 L253,151 V160 L251,159 Z" fill="#e8c050"/><path d="M261.5,146 V158" stroke="#777" stroke-width="1"/><path d="M273.5,145.5 H282 L285,148.5 V160.5 H273.5 Z" fill="#fff" stroke="#8a7a7a" stroke-width="1"/><path d="M275.5,153 L278,156 L283,150" stroke="#e06a50" stroke-width="1.4" fill="none"/><path d="M295,145 H307 V160 H295 Z" fill="#f8d978"/><path d="M306,153 L308,152 V161 L306,160 Z" fill="#e8c050"/><path d="M316,151.5 H323" stroke="#111" stroke-width="1.2"/><path d="M316,153.5 L319.5,157 L323,153.5 Z" fill="#111"/><path d="M331.5,146 V158" stroke="#777" stroke-width="1"/><path d="M1234,153.5 H1244" stroke="#666" stroke-width="1"/><rect x="1279.5" y="147.5" width="9" height="9" fill="none" stroke="#666" stroke-width="1"/><path d="M1325,147 L1335,157 M1335,147 L1325,157" stroke="#666" stroke-width="1"/><path d="M1316,177 L1320,181 L1324,177" fill="none" stroke="#999" stroke-width="1.2"/><circle cx="1341" cy="179" r="7" fill="#1a6ed0"/><text x="1341" y="183.5" font-size="11" font-weight="bold" fill="#fff" text-anchor="middle" font-family="Liberation Sans">?</text><path d="M255,209 H244 M248.5,204.5 L244,209 L248.5,213.5" fill="none" stroke="#777" stroke-width="1.6"/><path d="M273,209 H284 M279.5,204.5 L284,209 L279.5,213.5" fill="none" stroke="#c8c8c8" stroke-width="1.6"/><path d="M299,207.5 L302,210.5 L305,207.5" fill="none" stroke="#777" stroke-width="1.4"/><path d="M322.5,215 V204 M318,208.5 L322.5,204 L327,208.5" fill="none" stroke="#777" stroke-width="1.8"/><path d="M341,200 H353 V216 H341 Z" fill="#f8d978"/><path d="M352,208 L354,207 V217 L352,216 Z" fill="#e8c050"/><path d="M364,206 L367,209 L364,212" fill="none" stroke="#888" stroke-width="1.4"/><path d="M427,206 L430,209 L427,212" fill="none" stroke="#888" stroke-width="1.4"/><path d="M509,206 L512,209 L509,212" fill="none" stroke="#888" stroke-width="1.4"/><path d="M761,206 L764,209 L761,212" fill="none" stroke="#888" stroke-width="1.4"/><path d="M1098,206 L1102,210 L1106,206" fill="none" stroke="#777" stroke-width="1.6"/><path d="M1123,210 A4.5,4.5 0 1 1 1118.5,205.5" fill="none" stroke="#888" stroke-width="1.5"/><path d="M1117,203 L1120,205.5 L1117,208" fill="none" stroke="#888" stroke-width="1.3"/><circle cx="1328" cy="207" r="3.6" fill="none" stroke="#555" stroke-width="1.5"/><path d="M1325.5,209.5 L1321.5,213.5" stroke="#555" stroke-width="1.8"/><path d="M661.5,227 V252" stroke="#e5e5e5" stroke-width="1"/><path d="M781.5,227 V252" stroke="#e5e5e5" stroke-width="1"/><path d="M901.5,227 V252" stroke="#e5e5e5" stroke-width="1"/><path d="M981.5,227 V252" stroke="#e5e5e5" stroke-width="1"/><path d="M528,231.5 L531.5,228 L535,231.5" fill="none" stroke="#999" stroke-width="1.1"/><rect x="1305.5" y="706.5" width="21" height="22" fill="#cce8ff" stroke="#3c99dc" stroke-width="1"/><rect x="1309.5" y="711.5" width="3" height="3" fill="#fff" stroke="#999" stroke-width="0.8"/><path d="M1315,713 H1318 M1320,713 H1324" stroke="#566" stroke-width="1"/><rect x="1309.5" y="715.5" width="3" height="3" fill="#fff" stroke="#999" stroke-width="0.8"/><path d="M1315,717 H1318 M1320,717 H1324" stroke="#566" stroke-width="1"/><rect x="1309.5" y="719.5" width="3" height="3" fill="#fff" stroke="#999" stroke-width="0.8"/><path d="M1315,721 H1318 M1320,721 H1324" stroke="#566" stroke-width="1"/><rect x="1331.5" y="711.5" width="13" height="10" fill="#fff" stroke="#999" stroke-width="1"/><path d="M1333,713 H1343 V716 Q1338,714 1333,719 Z" fill="#6f9fd0"/><path d="M1333,719 Q1338,715 1343,718 V720 H1333 Z" fill="#2d4e5e"/><path d="M410,261 H421 V275 H410 Z" fill="#f8d978"/><path d="M421,270 L423,269 V276 L421,275 Z" fill="#e8c050"/><path d="M410,275 H421 L423,276 H412 Z" fill="#f0cc60"/><path d="M410,282 H421 V296 H410 Z" fill="#f8d978"/><path d="M421,291 L423,290 V297 L421,296 Z" fill="#e8c050"/><path d="M410,296 H421 L423,297 H412 Z" fill="#f0cc60"/><path d="M410.5,303.5 H419 L422.5,307 V318.5 H410.5 Z" fill="#fff" stroke="#9a9a9a" stroke-width="1"/><path d="M412.5,308.0 H420.5" stroke="#777" stroke-width="0.8"/><path d="M412.5,310.2 H420.5" stroke="#777" stroke-width="0.8"/><path d="M412.5,312.4 H420.5" stroke="#777" stroke-width="0.8"/><path d="M412.5,314.6 H420.5" stroke="#777" stroke-width="0.8"/><path d="M412.5,316.8 H420.5" stroke="#777" stroke-width="0.8"/><path d="M410.5,324.5 H419 L422.5,328 V339.5 H410.5 Z" fill="#fff" stroke="#9a9a9a" stroke-width="1"/><path d="M410,345 H421 V359 H410 Z" fill="#f8d978"/><path d="M421,354 L423,353 V360 L421,359 Z" fill="#e8c050"/><path d="M410,359 H421 L423,360 H412 Z" fill="#f0cc60"/><path d="M416,345 V359" stroke="#777" stroke-width="1.6" stroke-dasharray="1.2,1.2"/><rect x="409.5" y="367.5" width="15" height="13" fill="#f4f4f4" stroke="#8a8a8a" stroke-width="1"/><path d="M410,370 H424" stroke="#8a8a8a"/><circle cx="415" cy="375" r="2.5" fill="none" stroke="#999"/><circle cx="419" cy="376" r="2" fill="none" stroke="#999"/><path d="M410.5,387.5 H419 L422.5,391 V402.5 H410.5 Z" fill="#fff" stroke="#9a9a9a" stroke-width="1"/><path d="M410.5,408.5 H419 L422.5,412 V423.5 H410.5 Z" fill="#fff" stroke="#9a9a9a" stroke-width="1"/><path d="M410.5,429.5 H419 L422.5,433 V444.5 H410.5 Z" fill="#fff" stroke="#9a9a9a" stroke-width="1"/><rect x="412" y="433" width="6" height="6" rx="1.5" fill="#3f72a8"/><rect x="415" y="437" width="6" height="6" rx="1.5" fill="#f5c93a"/><path d="M410.5,450.5 H419 L422.5,454 V465.5 H410.5 Z" fill="#fff" stroke="#9a9a9a" stroke-width="1"/><rect x="412" y="454" width="6" height="6" rx="1.5" fill="#3f72a8"/><rect x="415" y="458" width="6" height="6" rx="1.5" fill="#f5c93a"/><path d="M410.5,471.5 H419 L422.5,475 V486.5 H410.5 Z" fill="#fff" stroke="#9a9a9a" stroke-width="1"/></svg><div class="a" style="left:628px;top:541px;width:581px;height:370px;background:#000;border:1px solid #7a7a7a"></div><div class="a" style="left:629px;top:542px;width:579px;height:30px;background:#fff"></div><div class="a" style="left:1191px;top:572px;width:17px;height:338px;background:#f4f1f4"></div><div class="t" style="left:659px;top:550.9px;font-size:11.9px;color:#000;">MINGW64:/c/Users/demouser/Downloads/Operationalizing-Machine-Learn...</div><svg class="L" width="1920" height="1044"><path d="M645,548.5 L649,552.5 L645,556.5 L641,552.5 Z" fill="#f08078"/><path d="M649.5,553 L653.5,557 L649.5,561 L645.5,557 Z" fill="#88d060"/><path d="M640.5,553 L644.5,557 L640.5,561 L636.5,557 Z" fill="#80a8f0"/><path d="M645,557.5 L649,561.5 L645,565.5 L641,561.5 Z" fill="#f6dc80"/><path d="M1089,556.5 H1099" stroke="#111" stroke-width="1"/><rect x="1134.5" y="551.5" width="9" height="9" fill="none" stroke="#111" stroke-width="1"/><path d="M1180,551 L1190,561 M1190,551 L1180,561" stroke="#111" stroke-width="1"/><path d="M1196,584 L1199.5,580.5 L1203,584" fill="none" stroke="#c0c0c0" stroke-width="1.6"/><path d="M1196,899 L1199.5,902.5 L1203,899" fill="none" stroke="#c0c0c0" stroke-width="1.6"/></svg><div class="t" style="left:630px;top:586.4px;font-family:'Liberation Mono',monospace;font-size:11.67px;line-height:14px;white-space:pre"><span style="color:#3cc43c">demouser@labvm</span><span style="color:#d2d2d2"> </span><span style="color:#c040c0">MINGW64</span><span style="color:#d2d2d2"> </span><span style="color:#c0c040">~/Downloads/Operationalizing-Machine-Learning-master</span></div><div class="t" style="left:630px;top:600.4px;font-family:'Liberation Mono',monospace;font-size:11.67px;line-height:14px;white-space:pre"><span style="color:#d2d2d2">$ python endpoint.py</span></div><div class="t" style="left:630px;top:614.4px;font-family:'Liberation Mono',monospace;font-size:11.67px;line-height:14px;white-space:pre"><span style="color:#d2d2d2">{"result": ["no", "no"]}</span></div><div class="t" style="left:630px;top:642.4px;font-family:'Liberation Mono',monospace;font-size:11.67px;line-height:14px;white-space:pre"><span style="color:#3cc43c">demouser@labvm</span><span style="color:#d2d2d2"> </span><span style="color:#c040c0">MINGW64</span><span style="color:#d2d2d2"> </span><span style="color:#c0c040">~/Downloads/Operationalizing-Machine-Learning-master</span></div><div class="t" style="left:630px;top:656.4px;font-family:'Liberation Mono',monospace;font-size:11.67px;line-height:14px;white-space:pre"><span style="color:#d2d2d2">$ </span></div><div class="a" style="left:644px;top:657px;width:1px;height:13px;background:#d2d2d2"></div><div class="a" style="left:1892px;top:326px;width:26px;height:203px;background:#3479c6;border-radius:3px"></div><div class="t" style="left:1905px;top:356px;transform-origin:0 0;transform:rotate(90deg) translate(0,-6.5px);font-size:10.6px;font-weight:bold;color:#fff;letter-spacing:0.4px">UDACITY NANODEGREE DEMO</div><svg class="L" width="1920" height="1044"><path d="M1904.5,337.5 L1899.5,343 L1904.5,348.5 M1910.5,337.5 L1905.5,343 L1910.5,348.5" fill="none" stroke="#fff" stroke-width="1.9"/></svg><div class="a" style="left:0;top:997px;width:1920px;height:43px;background:#000"></div><div class="a" style="left:343px;top:1000px;width:48px;height:40px;background:#2e2e2e"></div><div class="a" style="left:1803px;top:1000px;width:64px;height:39px;background:#1e1e1e"></div><div class="a" style="left:200px;top:1038px;width:40px;height:2px;background:#7ab8ea"></div><div class="a" style="left:249px;top:1038px;width:40px;height:2px;background:#7ab8ea"></div><div class="a" style="left:298px;top:1038px;width:40px;height:2px;background:#7ab8ea"></div><div class="a" style="left:343px;top:1038px;width:48px;height:2px;background:#7ab8ea"></div><div class="a" style="left:0;top:1040px;width:1920px;height:4px;background:#161616"></div><div class="a" style="left:48px;top:1040px;width:343px;height:4px;background:#f0f0f0"></div><div class="a" style="left:746px;top:1040px;width:150px;height:4px;background:#3c3c3c"></div><svg class="L" width="1920" height="1044"><path d="M16,1013.5 L23,1012.5 V1019.3 H16 Z M24,1012.3 L32.3,1011.2 V1019.3 H24 Z M16,1020.3 H23 V1027 L16,1026 Z M24,1020.3 H32.3 V1028.3 L24,1027.2 Z" fill="#fff"/><circle cx="74.5" cy="1018" r="5.6" fill="none" stroke="#fff" stroke-width="1.3"/><path d="M70.5,1022 L64.5,1028" stroke="#fff" stroke-width="1.4"/><path d="M112,1012.5 H123 M112,1027.5 H123 M112,1014 V1016 M123,1014 V1016 M112,1024 V1026 M123,1024 V1026" stroke="#fff" stroke-width="1.2" fill="none"/><rect x="112.5" y="1016.5" width="10" height="7" fill="none" stroke="#fff" stroke-width="1.2"/><path d="M127,1012 V1015 M127,1020 V1027.5" stroke="#fff" stroke-width="1.2"/><rect x="125.5" y="1016" width="3" height="3" fill="#fff"/><text x="161" y="1029" font-family="Liberation Sans" font-weight="bold" font-size="32" fill="#2aa6e6">e</text><path d="M162,1030 Q157,1025 165,1015 Q175,1005 181,1007.5 Q184,1010 178,1016" fill="none" stroke="#e8b828" stroke-width="1.9"/><path d="M209,1012 H218 L220,1014 H230.5 V1028.5 H209 Z" fill="#f5d57a"/><rect x="209" y="1015" width="21.5" height="13.5" fill="#fbe39a"/><path d="M214,1023 H226 V1029 H222 V1026 H218 V1029 H214 Z" fill="#2f8fd8"/><circle cx="268.8" cy="1019.8" r="11.3" fill="#fff"/><path d="M278.86,1014.66 A11.3,11.3 0 0 0 259.32,1013.66 L264.35,1022.37 A5.141500000000001,5.141500000000001 0 0 1 268.80,1014.66 Z" fill="#db4437"/><path d="M268.22,1031.09 A11.3,11.3 0 0 0 278.86,1014.66 L268.80,1014.66 A5.141500000000001,5.141500000000001 0 0 1 273.25,1022.37 Z" fill="#fcc934"/><path d="M259.32,1013.66 A11.3,11.3 0 0 0 268.22,1031.09 L273.25,1022.37 A5.141500000000001,5.141500000000001 0 0 1 264.35,1022.37 Z" fill="#1e9e4a"/><circle cx="268.8" cy="1019.8" r="5.141500000000001" fill="#fff"/><circle cx="268.8" cy="1019.8" r="4.181" fill="#4285f4"/><path d="M307,1027 L313,1010 L327,1012 L329,1029 Z" fill="#a8d8ec"/><path d="M313,1010 L327,1012 L328,1018 L311,1016 Z" fill="#e8f6fb"/><path d="M307,1027 L329,1029 L328,1031 L308,1029 Z" fill="#5a9ab8"/><path d="M366.5,1007.7 L371.8,1013.0 L366.5,1018.3 L361.2,1013.0 Z" fill="#f0716a"/><path d="M373.0,1014.2 L378.3,1019.5 L373.0,1024.8 L367.7,1019.5 Z" fill="#7ccc4e"/><path d="M366.5,1020.7 L371.8,1026.0 L366.5,1031.3 L361.2,1026.0 Z" fill="#f6d86b"/><path d="M360.0,1014.2 L365.3,1019.5 L360.0,1024.8 L354.7,1019.5 Z" fill="#6fa0ef"/><path d="M363.5,1010 L366.5,1015 V1026 M366.5,1017 L371,1021" stroke="#111" stroke-width="1.3" fill="none"/><circle cx="366.5" cy="1015" r="1.7" fill="#111"/><circle cx="371" cy="1021" r="1.7" fill="#111"/><circle cx="366.5" cy="1026" r="1.7" fill="#111"/><path d="M1737.5,1022.5 L1743,1017 L1748.5,1022.5" fill="none" stroke="#fff" stroke-width="1.1"/><rect x="1762.5" y="1014.5" width="12" height="9" fill="none" stroke="#fff" stroke-width="1"/><path d="M1768.5,1023.5 V1026 M1765,1026.5 H1772 M1759.5,1014 V1026.5" stroke="#fff" stroke-width="1"/><rect x="1759" y="1013.5" width="3.5" height="3" fill="none" stroke="#fff" stroke-width="0.9"/><path d="M1783.5,1017.5 H1785.5 L1788.5,1014.5 V1025.5 L1785.5,1022.5 H1783.5 Z" fill="none" stroke="#fff" stroke-width="1"/><circle cx="1794.5" cy="1023.5" r="4.5" fill="#e0303a"/><path d="M1792.5,1021.5 L1796.5,1025.5 M1796.5,1021.5 L1792.5,1025.5" stroke="#fff" stroke-width="1"/><path d="M1879.5,1012.5 H1895.5 V1024.5 H1890 L1887.5,1027.5 L1885,1024.5 H1879.5 Z" fill="none" stroke="#fff" stroke-width="1"/><path d="M1915.5,1000 V1040" stroke="#555" stroke-width="1"/></svg><div class="t" style="left:1812.5px;top:1005px;font-size:11.6px;color:#fff">9:50 AM</div><div class="t" style="left:1812px;top:1022.7px;font-size:11.6px;color:#fff">1/9/2021</div><div class="a" style="left:1763px;top:980px;width:144px;height:20px;background:#fff;border:1px solid #767676"></div><div class="t" style="left:1769.5px;top:984px;font-size:11.1px;color:#575757">Saturday, January 9, 2021</div></body></html>
